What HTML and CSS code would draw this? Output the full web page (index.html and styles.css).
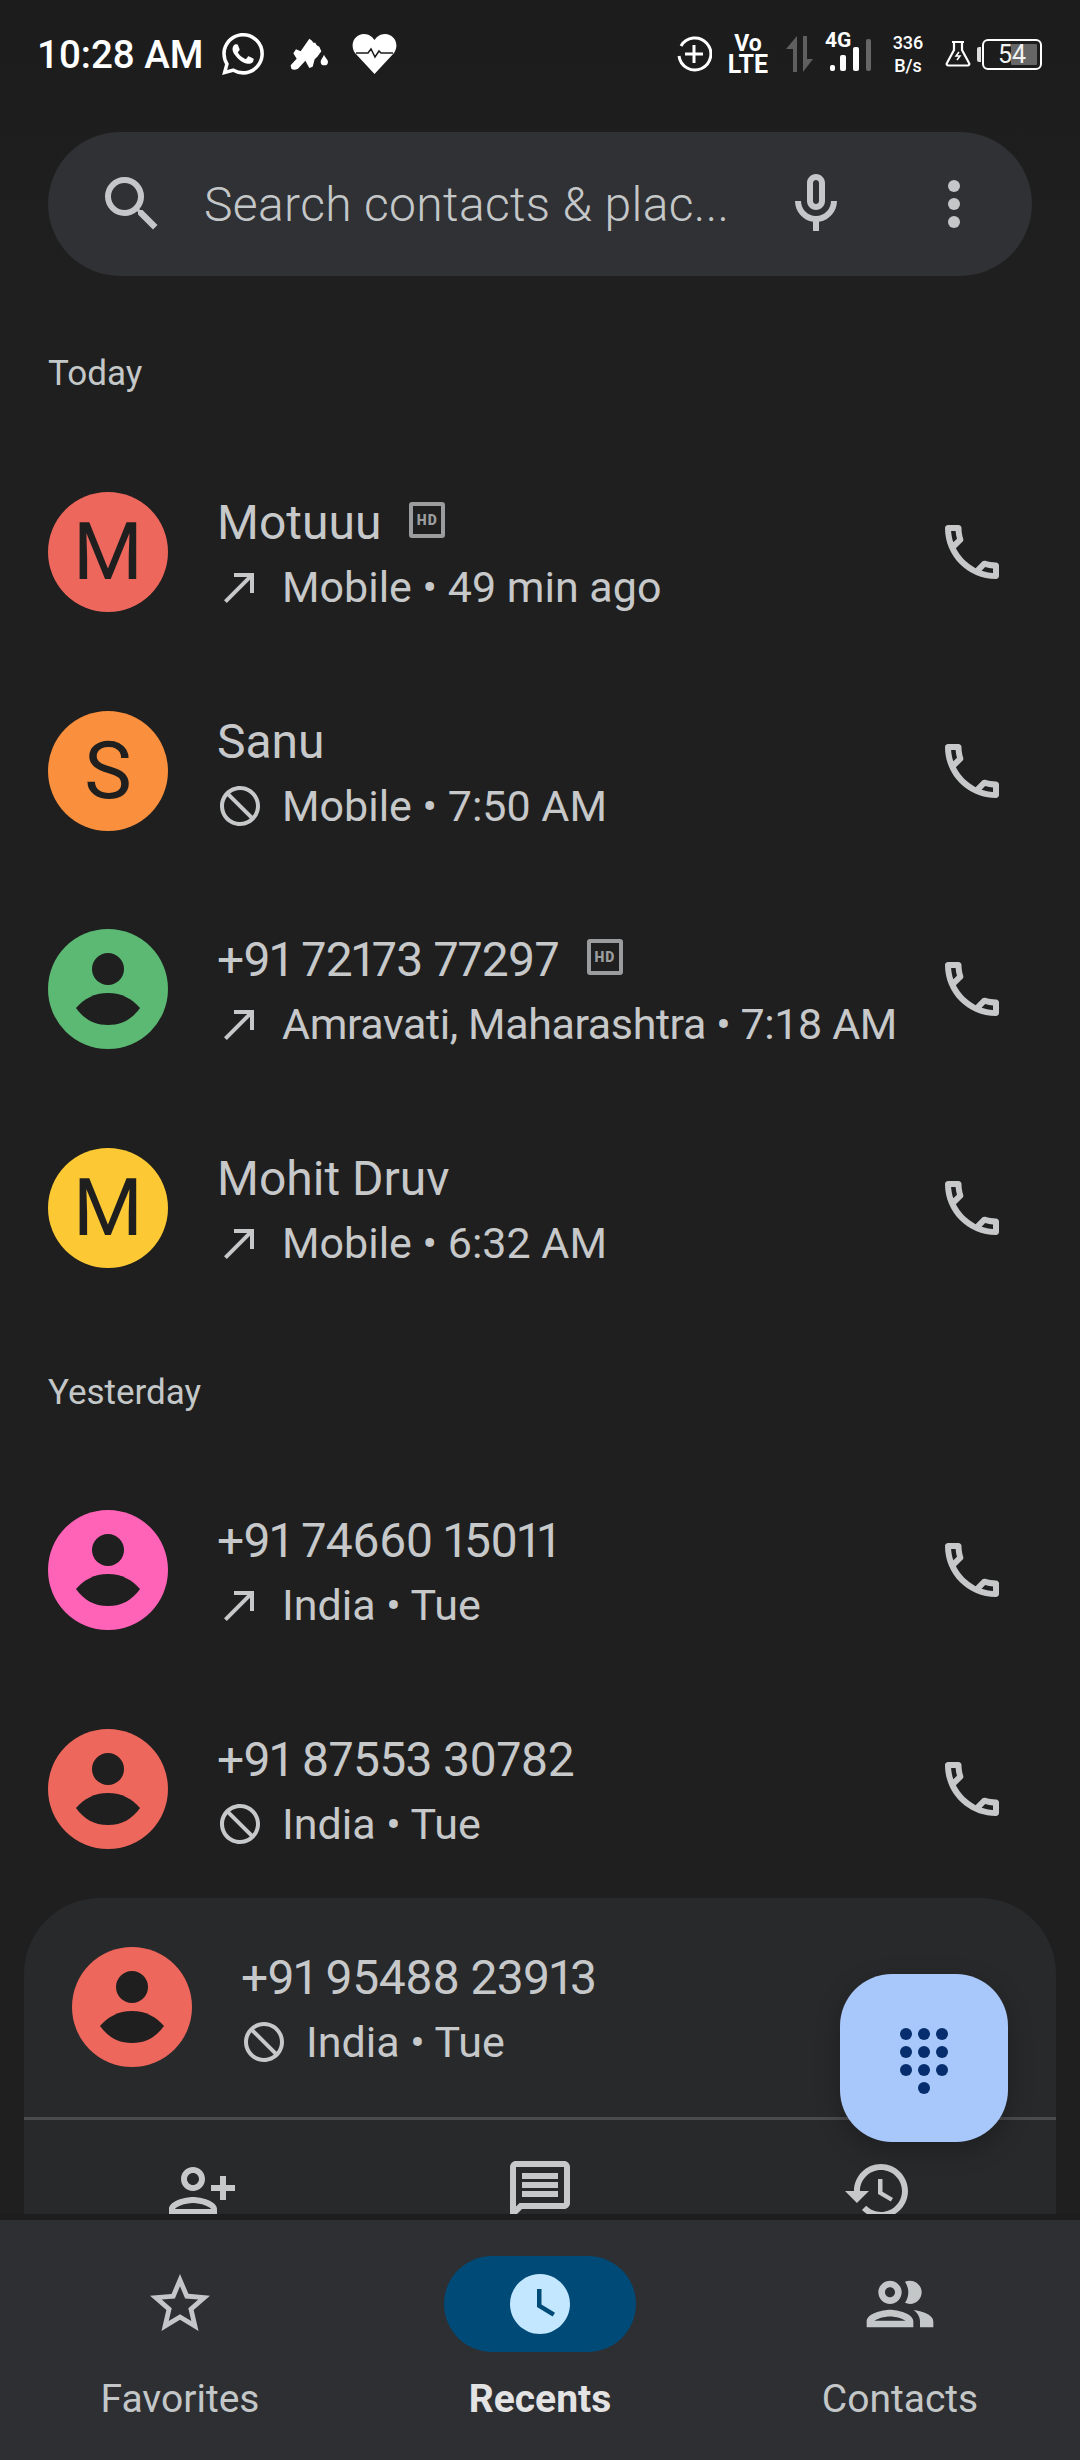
FILE: index.html
```html
<!DOCTYPE html>
<html lang="en">
<head>
    <meta charset="UTF-8">
    <meta name="viewport" content="width=device-width, initial-scale=1.0">
    <title>Recents</title>
    <link rel="stylesheet" href="styles.css">
</head>
<body>
    <!-- Icon sprite -->
    <svg class="sprite" xmlns="http://www.w3.org/2000/svg">
        <symbol id="i-call" viewBox="0 0 24 24"><path d="M6.54 5c.06.89.21 1.76.45 2.59l-1.2 1.2c-.41-1.2-.67-2.47-.76-3.79h1.51m9.86 12.02c.85.24 1.72.39 2.6.45v1.49c-1.32-.09-2.59-.35-3.8-.75l1.2-1.19M7.5 3H4c-.55 0-1 .45-1 1 0 9.39 7.61 17 17 17 .55 0 1-.45 1-1v-3.49c0-.55-.45-1-1-1-1.24 0-2.45-.2-3.57-.57-.1-.04-.21-.05-.31-.05-.26 0-.51.1-.71.29l-2.2 2.2c-2.83-1.45-5.15-3.76-6.59-6.59l2.2-2.2c.28-.28.36-.67.25-1.02C8.7 6.45 8.5 5.25 8.5 4c0-.55-.45-1-1-1z"/></symbol>
        <symbol id="i-made" viewBox="0 0 24 24"><path d="M9 5v2h6.59L4 18.59 5.41 20 17 8.41V15h2V5z"/></symbol>
        <symbol id="i-block" viewBox="0 0 24 24"><path transform="matrix(-1 0 0 1 24 0)" d="M12 2C6.48 2 2 6.48 2 12s4.48 10 10 10 10-4.48 10-10S17.52 2 12 2zM4 12c0-4.42 3.58-8 8-8 1.85 0 3.55.63 4.9 1.69L5.69 16.9C4.63 15.55 4 13.85 4 12zm8 8c-1.85 0-3.55-.63-4.9-1.69L18.31 7.1C19.37 8.45 20 10.15 20 12c0 4.42-3.58 8-8 8z"/></symbol>
        <symbol id="i-person" viewBox="0 0 120 120"><circle cx="60" cy="40" r="16"/><path d="M28 79C36 70 46 64 60 64s24 6 32 15c-8 11-18 17-32 17S36 90 28 79z"/></symbol>
    </svg>

    <header class="top">
        <div class="status">
            <div class="status-left">
                <span class="clock">10:28 AM</span>
                <svg class="st-whatsapp" viewBox="0 0 24 24"><path d="M17.472 14.382c-.297-.149-1.758-.867-2.03-.967-.273-.099-.471-.148-.67.15-.197.297-.767.966-.94 1.164-.173.199-.347.223-.644.075-.297-.15-1.255-.463-2.39-1.475-.883-.788-1.48-1.761-1.653-2.059-.173-.297-.018-.458.13-.606.134-.133.298-.347.446-.52.149-.174.198-.298.298-.497.099-.198.05-.371-.025-.52-.075-.149-.669-1.612-.916-2.207-.242-.579-.487-.5-.669-.51-.173-.008-.371-.01-.57-.01-.198 0-.52.074-.792.372-.272.297-1.04 1.016-1.04 2.479 0 1.462 1.065 2.875 1.213 3.074.149.198 2.096 3.2 5.077 4.487.709.306 1.262.489 1.694.625.712.227 1.36.195 1.871.118.571-.085 1.758-.719 2.006-1.413.248-.694.248-1.289.173-1.413-.074-.124-.272-.198-.57-.347m-5.421 7.403h-.004a9.87 9.87 0 01-5.031-1.378l-.361-.214-3.741.982.998-3.648-.235-.374a9.86 9.86 0 01-1.51-5.26c.001-5.45 4.436-9.884 9.888-9.884 2.64 0 5.122 1.03 6.988 2.898a9.825 9.825 0 012.893 6.994c-.003 5.45-4.437 9.884-9.885 9.884m8.413-18.297A11.815 11.815 0 0012.05 0C5.495 0 .16 5.335.157 11.892c0 2.096.547 4.142 1.588 5.945L.057 24l6.305-1.654a11.882 11.882 0 005.683 1.448h.005c6.554 0 11.89-5.335 11.893-11.893a11.821 11.821 0 00-3.48-8.413Z"/></svg>
                <svg class="st-glove" viewBox="30 36 114 99"><path d="M32 118L50 98 40 82 48 70 62 76 88 38 96 44 100 50 106 50 110 58 118 62 124 76 112 92 104 100 98 122 88 126 76 104 54 128Q42 134 34 128z"/><path d="M132 86c4 10 12 14 12 21a11 11 0 0 1-22 0c0-7 6-11 10-21z"/></svg>
                <svg class="st-heart" viewBox="0 0 45 40"><path d="M22.5 40L3 19C-3 10 3 0 12 0c5 0 8.500 3 10.500 6C24.500 3 28 0 33 0c9 0 15 10 9 19z"/><path class="ecg" d="M4 19h12l3-4 4 8 4-6 2 2h12"/></svg>
            </div>
            <div class="status-right">
                <svg class="st-plus" viewBox="0 0 36 36"><path d="M5 10A16 16 0 1 1 3 20M18 9v18M9 18h18"/></svg>
                <div class="st-volte"><span class="vo">Vo</span><span class="lte">LTE</span></div>
                <svg class="st-arrows" viewBox="0 0 27 36"><path d="M11 0v36H7V13H0zM17 36V0h4v23h6z"/></svg>
                <svg class="st-signal" viewBox="0 -8 46 48"><text x="0" y="15" class="st-4g">4G</text><rect x="5" y="33" width="5" height="6" rx="2"/><rect x="15" y="23" width="6" height="16" rx="2"/><rect x="28" y="15" width="6" height="24" rx="2"/><rect class="dim" x="41" y="7" width="5" height="32" rx="2"/></svg>
                <div class="st-speed"><span>336</span><span>B/s</span></div>
                <svg class="st-flask" viewBox="0 0 26 26"><path d="M7 1h12M9 1v8L2 22c-.8 1.400 0 2.500 1.500 2.500h19c1.500 0 2.300-1.100 1.500-2.500L17 9V1"/><path class="bolt" d="M14 11l-3 4h4l-3 4"/></svg>
                <div class="battery">
                    <span class="battery-tip"></span>
                    <div class="battery-body"><span class="battery-fill"></span><span class="battery-num">54</span></div>
                </div>
            </div>
        </div>

        <div class="search">
            <svg class="icon-72" viewBox="0 0 24 24"><path d="M15.500 14h-.79l-.28-.27A6.470 6.470 0 0 0 16 9.500 6.500 6.500 0 1 0 9.500 16c1.610 0 3.090-.59 4.230-1.570l.27.28v.79l5 4.990L20.490 19l-4.990-5zm-6 0C7.010 14 5 11.990 5 9.500S7.010 5 9.500 5 14 7.010 14 9.500 11.990 14 9.500 14z"/></svg>
            <span class="search-text">Search contacts &amp; plac...</span>
            <svg class="icon-72 search-mic" viewBox="0 0 24 24"><path d="M12 14c1.660 0 3-1.340 3-3V5c0-1.660-1.340-3-3-3S9 3.340 9 5v6c0 1.660 1.340 3 3 3zm-1-9c0-.55.45-1 1-1s1 .45 1 1v6c0 .55-.45 1-1 1s-1-.45-1-1V5zm6 6c0 2.760-2.240 5-5 5s-5-2.240-5-5H5c0 3.530 2.610 6.430 6 6.920V21h2v-3.080c3.390-.49 6-3.390 6-6.920h-2z"/></svg>
            <svg class="icon-72 search-more" viewBox="0 0 24 24"><circle cx="12" cy="6" r="2"/><circle cx="12" cy="12" r="2"/><circle cx="12" cy="18" r="2"/></svg>
        </div>
    </header>

    <main class="log">
        <div class="day day-first">Today</div>

        <div class="row">
            <div class="avatar red">M</div>
            <div class="info">
                <div class="name">Motuuu <span class="hd">HD</span></div>
                <div class="sub"><svg class="sub-icon"><use href="#i-made"/></svg>Mobile • 49 min ago</div>
            </div>
            <svg class="call"><use href="#i-call"/></svg>
        </div>

        <div class="row">
            <div class="avatar orange">S</div>
            <div class="info">
                <div class="name">Sanu</div>
                <div class="sub"><svg class="sub-icon"><use href="#i-block"/></svg>Mobile • 7:50 AM</div>
            </div>
            <svg class="call"><use href="#i-call"/></svg>
        </div>

        <div class="row">
            <div class="avatar green"><svg><use href="#i-person"/></svg></div>
            <div class="info">
                <div class="name"><span class="num">+91 72173 77297</span> <span class="hd">HD</span></div>
                <div class="sub sub-long"><svg class="sub-icon"><use href="#i-made"/></svg>Amravati, Maharashtra • 7:18 AM</div>
            </div>
            <svg class="call"><use href="#i-call"/></svg>
        </div>

        <div class="row">
            <div class="avatar yellow">M</div>
            <div class="info">
                <div class="name">Mohit Druv</div>
                <div class="sub"><svg class="sub-icon"><use href="#i-made"/></svg>Mobile • 6:32 AM</div>
            </div>
            <svg class="call"><use href="#i-call"/></svg>
        </div>

        <div class="day day-next">Yesterday</div>

        <div class="row">
            <div class="avatar pink"><svg><use href="#i-person"/></svg></div>
            <div class="info">
                <div class="name"><span class="num">+91 74660 15011</span></div>
                <div class="sub"><svg class="sub-icon"><use href="#i-made"/></svg>India • Tue</div>
            </div>
            <svg class="call"><use href="#i-call"/></svg>
        </div>

        <div class="row">
            <div class="avatar red"><svg><use href="#i-person"/></svg></div>
            <div class="info">
                <div class="name"><span class="num">+91 87553 30782</span></div>
                <div class="sub"><svg class="sub-icon"><use href="#i-block"/></svg>India • Tue</div>
            </div>
            <svg class="call"><use href="#i-call"/></svg>
        </div>

        <!-- opened entry -->
        <div class="sheet">
            <div class="row">
                <div class="avatar red"><svg><use href="#i-person"/></svg></div>
                <div class="info">
                    <div class="name"><span class="num">+91 95488 23913</span></div>
                    <div class="sub"><svg class="sub-icon"><use href="#i-block"/></svg>India • Tue</div>
                </div>
            </div>
            <div class="actions">
                <svg class="icon-72 flip" viewBox="0 0 24 24"><path d="M15 12c2.210 0 4-1.790 4-4s-1.790-4-4-4-4 1.790-4 4 1.790 4 4 4zm0-6c1.100 0 2 .9 2 2s-.9 2-2 2-2-.9-2-2 .9-2 2-2zm0 8c-2.670 0-8 1.340-8 4v2h16v-2c0-2.660-5.330-4-8-4zm-6 4c.22-.72 3.310-2 6-2 2.700 0 5.800 1.290 6 2H9zm-3-3v-3h3v-2H6V7H4v3H1v2h3v3h2z"/></svg>
                <svg class="icon-72" viewBox="0 0 24 24"><path d="M20 2H4c-1.100 0-1.990.9-1.990 2L2 22l4-4h14c1.100 0 2-.9 2-2V4c0-1.100-.9-2-2-2zm0 14H5.170L4 17.170V4h16v12zM6 12h12v2H6zm0-3h12v2H6zm0-3h12v2H6z"/></svg>
                <svg class="icon-72" viewBox="0 0 24 24"><path d="M13 3c-4.970 0-9 4.030-9 9H1l3.890 3.890.07.14L9 12H6c0-3.870 3.130-7 7-7s7 3.130 7 7-3.130 7-7 7c-1.930 0-3.680-.79-4.940-2.060l-1.420 1.420C8.270 19.990 10.510 21 13 21c4.970 0 9-4.030 9-9s-4.030-9-9-9zm-1 5v5l4.280 2.540.72-1.210-3.500-2.080V8H12z"/></svg>
            </div>
        </div>
    </main>

    <button class="fab">
        <svg viewBox="0 0 48 72"><circle cx="6" cy="6" r="6"/><circle cx="24" cy="6" r="6"/><circle cx="42" cy="6" r="6"/><circle cx="6" cy="24" r="6"/><circle cx="24" cy="24" r="6"/><circle cx="42" cy="24" r="6"/><circle cx="6" cy="42" r="6"/><circle cx="24" cy="42" r="6"/><circle cx="42" cy="42" r="6"/><circle cx="24" cy="60" r="6"/></svg>
    </button>

    <nav class="tabs">
        <a class="tab">
            <span class="tab-pill"><svg class="icon-72" viewBox="0 0 24 24"><path d="M22 9.240l-7.190-.62L12 2 9.190 8.630 2 9.240l5.460 4.730L5.820 21 12 17.270 18.180 21l-1.630-7.030L22 9.240zM12 15.400l-3.760 2.270 1-4.280-3.320-2.880 4.380-.38L12 6.100l1.710 4.040 4.380.38-3.320 2.880 1 4.280L12 15.400z"/></svg></span>
            <span class="tab-label">Favorites</span>
        </a>
        <a class="tab active">
            <span class="tab-pill"><svg class="icon-72" viewBox="0 0 24 24"><path d="M12 2C6.500 2 2 6.500 2 12s4.500 10 10 10 10-4.500 10-10S17.500 2 12 2zm4.200 14.200L11 13V7h1.500v5.200l4.500 2.700-.8 1.300z"/></svg></span>
            <span class="tab-label">Recents</span>
        </a>
        <a class="tab">
            <span class="tab-pill"><svg class="icon-80" viewBox="0 0 24 24"><path d="M9 13.750c-2.340 0-7 1.170-7 3.500V19h14v-1.750c0-2.330-4.660-3.500-7-3.500zM4.340 17c.84-.58 2.870-1.250 4.660-1.250s3.820.67 4.660 1.250H4.340zM9 12c1.930 0 3.500-1.570 3.500-3.500S10.930 5 9 5 5.500 6.570 5.500 8.500 7.070 12 9 12zm0-5c.83 0 1.500.67 1.500 1.500S9.830 10 9 10s-1.500-.67-1.500-1.500S8.170 7 9 7zm7.040 6.810c1.160.84 1.960 1.960 1.960 3.440V19h4v-1.750c0-2.020-3.500-3.170-5.960-3.440zM15 12c1.930 0 3.500-1.570 3.500-3.500S16.930 5 15 5c-.54 0-1.040.13-1.500.35.630.89 1 1.980 1 3.150s-.37 2.260-1 3.150c.46.22.96.35 1.500.35z"/></svg></span>
            <span class="tab-label">Contacts</span>
        </a>
    </nav>
</body>
</html>
```

FILE: styles.css
```css
html, body {
    margin: 0;
    padding: 0;
}
body {
    position: relative;
    width: 1080px;
    height: 2460px;
    overflow: hidden;
    display: flex;
    flex-direction: column;
    background-color: #1d1d1e;
    font-family: Roboto, Arial, sans-serif;
    color: #c6c8c9;
}
.sprite {
    display: none;
}
svg {
    fill: currentColor;
}
.icon-72 {
    width: 72px;
    height: 72px;
    flex: none;
}
.icon-80 {
    width: 80px;
    height: 80px;
    flex: none;
}
.flip {
    transform: scaleX(-1);
}

/* Status bar */
.top {
    flex: none;
    background: linear-gradient(#1c1c1d, #1f1f1f);
}
.status {
    height: 132px;
    box-sizing: border-box;
    padding: 0 38px 24px 37px;
    display: flex;
    justify-content: space-between;
    align-items: center;
    color: #fff;
}
.status-left, .status-right {
    display: flex;
    align-items: center;
}
.clock {
    font-size: 38.5px;
    font-weight: 500;
    margin-right: 19px;
}
.st-whatsapp {
    width: 42px;
    height: 42px;
    margin-right: 26px;
}
.st-glove {
    width: 38px;
    height: 33px;
    margin-right: 24px;
}
.st-heart {
    width: 45px;
    height: 40px;
}
.ecg {
    fill: none;
    stroke: #1c1c1d;
    stroke-width: 1.5;
}
.st-plus {
    width: 36px;
    height: 36px;
    margin-right: 16px;
    fill: none;
    stroke: #fff;
    stroke-width: 3;
}
.st-volte {
    width: 40px;
    display: flex;
    flex-direction: column;
    align-items: center;
    font-weight: 700;
    margin-right: 18px;
}
.vo {
    display: block;
    font-size: 23px;
    line-height: 21px;
}
.lte {
    display: block;
    font-size: 25px;
    line-height: 21px;
}
.st-arrows {
    width: 27px;
    height: 36px;
    margin-right: 12px;
    color: #5f5f60;
}
.st-signal {
    width: 46px;
    height: 48px;
    margin: 0 20px 12px 0;
}
.st-4g {
    font-size: 21px;
    font-weight: 700;
}
.st-signal .dim {
    fill: #666;
}
.st-speed {
    width: 34px;
    display: flex;
    flex-direction: column;
    align-items: center;
    font-size: 18px;
    font-weight: 500;
    line-height: 23px;
    margin-right: 20px;
}
.st-flask {
    width: 26px;
    height: 26px;
    margin-right: 6px;
    fill: none;
    stroke: #fff;
    stroke-width: 2.2;
}
.st-flask .bolt {
    stroke-width: 1.5;
}
.battery {
    display: flex;
    align-items: center;
    gap: 1px;
}
.battery-tip {
    width: 4px;
    height: 15px;
    background-color: #ddd;
    border-radius: 2px 0 0 2px;
}
.battery-body {
    position: relative;
    width: 60px;
    height: 31px;
    box-sizing: border-box;
    border: 2px solid #fff;
    border-radius: 6px;
    display: flex;
    justify-content: center;
    align-items: center;
}
.battery-fill {
    position: absolute;
    top: 3px;
    bottom: 3px;
    right: 3px;
    width: 26px;
    background-color: #666;
    border-radius: 1px;
}
.battery-num {
    position: relative;
    font-size: 25px;
    line-height: 27px;
    font-weight: 400;
    color: #f2f2f2;
}

/* Search */
.search {
    height: 144px;
    margin: 0 48px;
    background-color: #303135;
    border-radius: 72px;
    display: flex;
    align-items: center;
    padding-left: 48px;
    color: #c4c7c8;
}
.search-text {
    margin-left: 36px;
    font-size: 48px;
    font-weight: 300;
    letter-spacing: 0.35px;
    width: 541px;
    white-space: nowrap;
}
.search-mic {
    margin-left: 35px;
}
.search-more {
    margin-left: 66px;
}

/* List */
.log {
    flex: none;
    height: 1938px;
    overflow: hidden;
    background-color: #1f1f1f;
}
.day {
    padding-left: 48px;
    font-size: 35px;
    line-height: 44px;
    color: #c4c7c8;
}
.day-first {
    padding-top: 76px;
    padding-bottom: 47px;
}
.day-next {
    padding-top: 54px;
    padding-bottom: 46px;
}
.row {
    height: 218.5px;
    box-sizing: border-box;
    padding: 0 72px 0 48px;
    display: flex;
    align-items: center;
}
.avatar {
    width: 120px;
    height: 120px;
    flex: none;
    border-radius: 50%;
    margin-right: 49px;
    display: flex;
    justify-content: center;
    align-items: center;
    font-size: 80px;
    color: #1f1f1f;
}
.avatar svg {
    width: 120px;
    height: 120px;
}
.red {
    background-color: #ee675c;
}
.orange {
    background-color: #fa903e;
}
.green {
    background-color: #5bb974;
}
.yellow {
    background-color: #fcc934;
}
.pink {
    background-color: #ff63b8;
}
.info {
    flex: 1;
    min-width: 0;
    padding-top: 6px;
}
.name {
    display: flex;
    align-items: center;
    font-size: 48px;
    line-height: 64px;
    white-space: pre;
}
.num {
    font-variant-numeric: proportional-nums;
    letter-spacing: -0.7px;
}
.hd {
    width: 36px;
    height: 36px;
    box-sizing: border-box;
    margin: -6px 0 0 16px;
    border: 4px solid #9a9c9e;
    border-radius: 3px;
    display: flex;
    justify-content: center;
    align-items: center;
    font-size: 14px;
    font-weight: 900;
    letter-spacing: 1px;
    color: #9a9c9e;
}
.num + .hd {
    margin-left: 28px;
}
.sub {
    display: flex;
    align-items: center;
    font-size: 43px;
    line-height: 64px;
    white-space: nowrap;
}
.sub-long {
    letter-spacing: -0.4px;
}
.sub-icon {
    width: 48px;
    height: 48px;
    margin: 0 18px 0 -1px;
    flex: none;
}
.call {
    width: 72px;
    height: 72px;
    flex: none;
}
.sheet {
    margin: 0 24px;
    background-color: #28292b;
    border-radius: 76px 76px 0 0;
}
.actions {
    border-top: 3px solid #4a4b4d;
    padding: 35px 9px 0;
    display: grid;
    grid-template-columns: repeat(3, 1fr);
    justify-items: center;
}

/* Dial button */
.fab {
    position: absolute;
    left: 840px;
    top: 1974px;
    width: 168px;
    height: 168px;
    padding: 0;
    border: none;
    border-radius: 52px;
    background-color: #a8c7fa;
    box-shadow: 0 8px 24px rgba(0, 0, 0, 0.25);
    display: flex;
    justify-content: center;
    align-items: center;
    color: #062e6f;
}
.fab svg {
    width: 48px;
    height: 72px;
    margin-top: 12px;
}

/* Bottom nav */
.tabs {
    flex: none;
    margin-top: 6px;
    height: 240px;
    background-color: #2d2f33;
    display: grid;
    grid-template-columns: repeat(3, 1fr);
}
.tab {
    display: flex;
    flex-direction: column;
    align-items: center;
    padding-top: 36px;
    color: #c4c7c8;
}
.tab-pill {
    width: 192px;
    height: 96px;
    border-radius: 48px;
    display: flex;
    justify-content: center;
    align-items: center;
}
.tab-label {
    margin-top: 23px;
    font-size: 39px;
    line-height: 48px;
}
.active .tab-pill {
    background-color: #004a77;
    color: #c2e7ff;
}
.active .tab-label {
    font-weight: 700;
    color: #e3e3e3;
}
```
